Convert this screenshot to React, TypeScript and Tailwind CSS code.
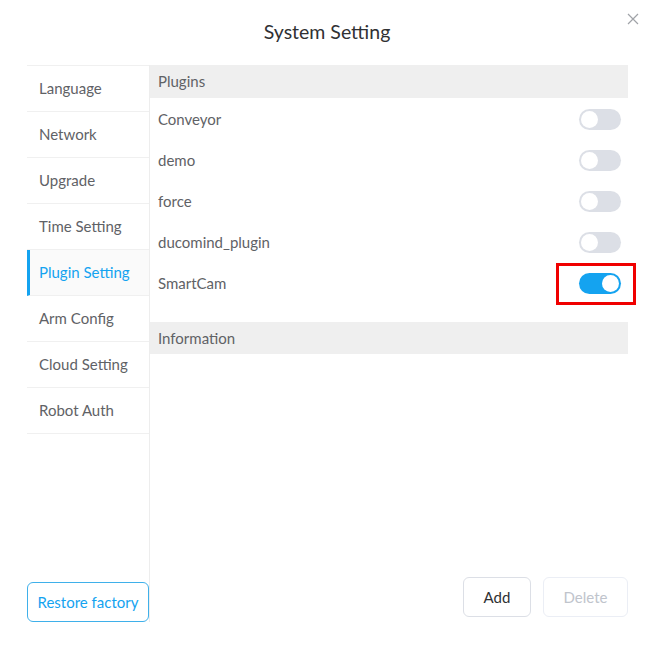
const menu = [
  "Language",
  "Network",
  "Upgrade",
  "Time Setting",
  "Plugin Setting",
  "Arm Config",
  "Cloud Setting",
  "Robot Auth",
];

const plugins = [
  { name: "Conveyor", on: false },
  { name: "demo", on: false },
  { name: "force", on: false },
  { name: "ducomind_plugin", on: false },
  { name: "SmartCam", on: true },
];

function Toggle({ on, marked }: { on: boolean; marked?: boolean }) {
  const sw = (
    <span
      className={`flex h-[21px] w-[42px] items-center rounded-full p-[2px] ${
        on ? "justify-end bg-[#14a3f0]" : "justify-start bg-[#dcdfe6]"
      }`}
    >
      <span className="h-[17px] w-[17px] rounded-full bg-white" />
    </span>
  );
  if (!marked) return sw;
  return (
    <span className="-mr-[15px] flex h-[42px] w-[80px] items-center justify-end border-[3px] border-[#f00000] pr-[12px]">
      {sw}
    </span>
  );
}

export default function App() {
  return (
    <div
      className="relative h-[658px] w-[670px] bg-white text-[15px] text-[#5f6266]"
      style={{ fontFamily: "Lato, 'Noto Sans', sans-serif" }}
    >
      <button className="absolute right-[31px] top-[13px] text-[#a0a3a8]">
        <svg width="12" height="12" viewBox="0 0 12 12" fill="none" stroke="currentColor" strokeWidth="1.2">
          <path d="M1 1l10 10M11 1L1 11" />
        </svg>
      </button>

      <div className="flex h-[65px] items-center justify-center pb-[1px] pr-[16px] text-[19.5px] text-[#303133]">
        System Setting
      </div>

      <div className="flex h-[557px] pl-[27px] pr-[42px]">
        {/* Sidebar */}
        <div className="flex w-[123px] flex-col border-r border-[#ededed]">
          <div className="border-t border-[#f0f0f0]">
            {menu.map((m) => {
              const active = m === "Plugin Setting";
              return (
                <div
                  key={m}
                  className={
                    active
                      ? "flex h-[46px] items-center border-b border-l-[3px] border-[#f0f0f0] border-l-[#14a3f0] bg-[#fafafa] pl-[9px] text-[#14a3f0]"
                      : "flex h-[46px] items-center border-b border-[#f0f0f0] pl-[12px]"
                  }
                >
                  {m}
                </div>
              );
            })}
          </div>
          <div className="mt-auto">
            <button className="h-[40px] w-[122px] rounded-[6px] border border-[#3fb0ea] text-[15px] text-[#14a3f0]">
              Restore factory
            </button>
          </div>
        </div>

        {/* Content */}
        <div className="flex flex-1 flex-col">
          <div className="flex h-[33px] items-center bg-[#efefef] pl-[8px]">Plugins</div>
          <div className="pt-[1px]">
            {plugins.map((p) => (
              <div key={p.name} className="flex h-[41px] items-center justify-between pl-[8px] pr-[7px]">
                <span>{p.name}</span>
                <Toggle on={p.on} marked={p.on} />
              </div>
            ))}
          </div>
          <div className="mt-[18px] flex h-[32px] items-center bg-[#efefef] pl-[8px]">Information</div>

          <div className="mt-auto flex justify-end gap-[12px] pb-[5px]">
            <button className="h-[40px] w-[68px] rounded-[6px] border border-[#dcdfe6] text-[#303133]">Add</button>
            <button className="h-[40px] w-[85px] rounded-[6px] border border-[#ebeef5] text-[#c0c4cc]">Delete</button>
          </div>
        </div>
      </div>
    </div>
  );
}
